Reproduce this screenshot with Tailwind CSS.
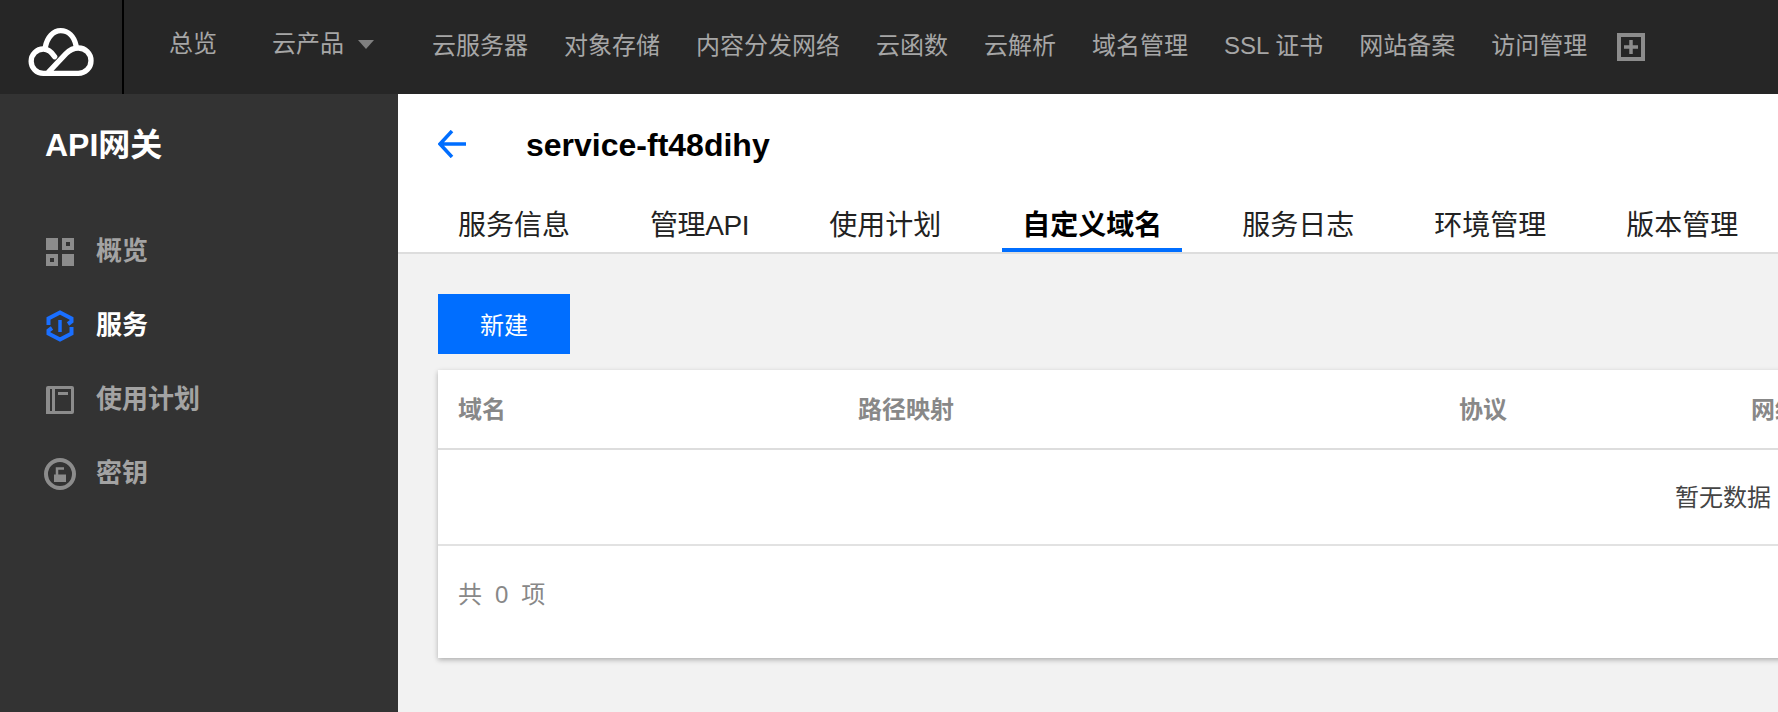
<!DOCTYPE html>
<html lang="zh-CN">
<head>
<meta charset="utf-8">
<title>API网关</title>
<script src="https://cdn.jsdelivr.net/npm/@tailwindcss/browser@4"></script>
</head>
<body class="h-[712px] overflow-hidden bg-[#f2f2f2] font-['Liberation_Sans','Noto_Sans_CJK_SC',sans-serif]">
<header class="flex h-[94px] items-center bg-[#262626] text-[24px] leading-[32px] text-[#a6a6a6]">
  <div class="flex h-full w-[124px] shrink-0 items-center border-r-2 border-black pl-[20px]">
    <svg width="85" height="58" viewBox="30 15 255 174" fill="none" stroke="#fff" stroke-width="16" stroke-linecap="round" stroke-linejoin="round" class="block">
      <path d="M106 102C112 72 130 53 152 53C175 53 192 70 198 97"/>
      <path d="M134 131C124 116 112 108 100 108A36.5 36.5 0 0 0 100 181L205 181A38 38 0 0 0 205 105C190 105 178 112 168 122L115 178"/>
    </svg>
  </div>
  <nav class="flex items-center pl-[45px]">
    <a class="-mt-[6px]">总览</a>
    <a class="-mt-[6px] ml-[55px]">云产品</a>
    <span class="-mt-[6px] ml-[14px] h-0 w-0 border-x-[8px] border-t-[9px] border-x-transparent border-t-[#808080]"></span>
    <div class="-mt-[3px] ml-[58px] flex items-center gap-[36px]">
      <a>云服务器</a>
      <a>对象存储</a>
      <a>内容分发网络</a>
      <a>云函数</a>
      <a>云解析</a>
      <a>域名管理</a>
      <a>SSL 证书</a>
      <a>网站备案</a>
      <a>访问管理</a>
    </div>
    <svg width="28" height="28" viewBox="0 0 28 28" class="ml-[30px] block" fill="none" stroke="#8c8c8c">
      <rect x="2" y="2" width="24" height="24" stroke-width="4"/>
      <path d="M14 7V21M7 14H21" stroke-width="3.5"/>
    </svg>
  </nav>
</header>
<div class="flex h-[618px]">
  <aside class="w-[398px] shrink-0 bg-[#333333]">
    <div class="flex h-[106px] items-center pl-[45px] pb-[4px] text-[32px] font-bold leading-[40px] text-white">API网关</div>
    <ul class="flex flex-col gap-[37px] pl-[46px] pt-[33px] text-[26px] font-bold leading-[37px] text-[#a3a3a3]">
      <li class="flex items-center gap-[22px]">
        <svg width="28" height="28" viewBox="0 0 28 28" class="block">
          <path fill="#8c8c8c" fill-rule="evenodd" d="M0 0H12V12H0ZM16 0H28V12H16ZM20 4V8H24V4ZM0 16H12V28H0ZM4 20V24H8V20ZM16 16H28V28H16Z"/>
        </svg>
        <span>概览</span>
      </li>
      <li class="flex items-center gap-[22px] text-white">
        <svg width="28" height="32" viewBox="0 0 28 32" fill="none" stroke="#1a6fff" class="block">
          <path d="M2.5 15V8.5L14 2.5L25.5 8.5V11.5L22 14" stroke-width="4"/>
          <path d="M25.5 17V23.5L14 29.5L2.5 23.5V20.5L6 18" stroke-width="4"/>
          <path d="M14 10V22" stroke-width="3.5"/>
        </svg>
        <span>服务</span>
      </li>
      <li class="flex items-center gap-[22px]">
        <svg width="28" height="28" viewBox="0 0 28 28" class="block">
          <path fill="#8c8c8c" fill-rule="evenodd" d="M2 0H26A2 2 0 0 1 28 2V26A2 2 0 0 1 26 28H0V2A2 2 0 0 1 2 0ZM4 3V25H6V3ZM9 3V25H25V3ZM12 6V9H22V6Z"/>
          <rect x="12" y="6" width="10" height="3" fill="#8c8c8c"/>
        </svg>
        <span>使用计划</span>
      </li>
      <li class="-ml-[2px] flex items-center gap-[20px]">
        <svg width="32" height="32" viewBox="0 0 32 32" class="block">
          <circle cx="16" cy="16" r="14" fill="none" stroke="#8c8c8c" stroke-width="4"/>
          <path fill="none" stroke="#8c8c8c" stroke-width="2.5" d="M13 17V10.5H20"/>
          <path fill="#8c8c8c" d="M10 16.5H22V24H10Z"/>
        </svg>
        <span>密钥</span>
      </li>
    </ul>
  </aside>
  <main class="min-w-0 flex-1 overflow-hidden">
    <section class="h-[160px] border-b-2 border-[#dddddd] bg-white">
      <div class="flex h-[102px] items-center pl-[40px]">
        <svg width="28" height="28" viewBox="0 0 28 28" fill="none" stroke="#006eff" stroke-width="3.5" class="-mt-[3px] block">
          <path d="M14 1L2 14L14 27M2 14H28"/>
        </svg>
        <h1 class="ml-[60px] text-[32px] font-bold leading-[40px] text-black">service-ft48dihy</h1>
      </div>
      <nav class="flex gap-[38px] pl-[40px] text-[28px] leading-[36px] text-[#222222]">
        <a class="h-[56px] pl-[20px] pr-[22px] pt-[12px]">服务信息</a>
        <a class="h-[56px] pl-[20px] pr-[21px] pt-[12px] tracking-[-0.4px]">管理API</a>
        <a class="h-[56px] px-[21px] pt-[12px]">使用计划</a>
        <a class="ml-[2px] mr-[1px] h-[56px] border-b-4 border-[#006eff] px-[20px] pt-[12px] font-bold text-black">自定义域名</a>
        <a class="h-[56px] px-[21px] pt-[12px]">服务日志</a>
        <a class="h-[56px] px-[21px] pt-[12px]">环境管理</a>
        <a class="h-[56px] px-[21px] pt-[12px]">版本管理</a>
      </nav>
    </section>
    <section class="pl-[40px] pt-[40px]">
      <button class="block h-[60px] w-[132px] bg-[#006eff] pt-[3px] text-[24px] leading-[32px] text-white">新建</button>
      <div class="mt-[16px] w-[2570px] bg-white text-[24px] leading-[32px] shadow-[0_2px_5px_rgba(0,0,0,0.28)]">
        <div class="grid h-[80px] grid-cols-[400px_601px_292px_1fr] items-center border-b-2 border-[#dddddd] pl-[20px] pt-[2px] font-bold text-[#888888]">
          <span>域名</span>
          <span>路径映射</span>
          <span>协议</span>
          <span>网络</span>
        </div>
        <div class="flex h-[96px] items-center justify-center border-b-2 border-[#e2e2e2] pt-[2px] text-[#444444]">暂无数据</div>
        <div class="flex h-[112px] items-center gap-[13px] pb-[14px] pl-[20px] text-[#888888]">
          <span>共</span><span>0</span><span>项</span>
        </div>
      </div>
    </section>
  </main>
</div>
</body>
</html>
